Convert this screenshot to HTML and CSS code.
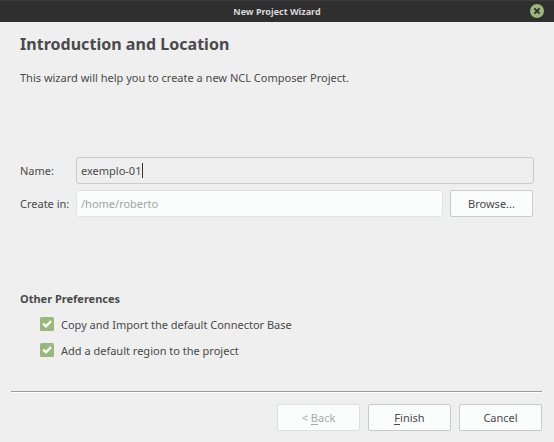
FILE: index.html
```html
<!DOCTYPE html>
<html lang="en">
<head>
<meta charset="utf-8">
<title>New Project Wizard</title>
<link rel="stylesheet" href="styles.css">
</head>
<body>
<div class="window">
  <header class="titlebar">
    <span class="titlebar-text">New Project Wizard</span>
    <svg class="close" width="14" height="14" viewBox="0 0 14 14"><circle cx="7" cy="7" r="7" fill="#9ab87c"/><path d="M4.4 4.4l5.2 5.2M9.6 4.4L4.4 9.6" stroke="#2f2f2f" stroke-width="1.9"/></svg>
  </header>
  <main class="page">
    <h1 class="heading">Introduction and Location</h1>
    <p class="intro">This wizard will help you to create a new NCL Composer Project.</p>
    <div class="form">
      <div class="row">
        <span class="label">Name:</span>
        <div class="field field-active"><span>exemplo-01</span><i class="caret"></i></div>
      </div>
      <div class="row">
        <span class="label">Create in:</span>
        <div class="field field-disabled"><span>/home/roberto</span></div>
        <button class="button browse">Browse...</button>
      </div>
    </div>
    <h2 class="subheading">Other Preferences</h2>
    <div class="options">
      <div class="option">
        <svg class="check" width="14" height="14" viewBox="0 0 14 14"><rect width="14" height="14" rx="1.5" fill="#9ab87c"/><path d="M3.2 6.6l2.8 2.7 5-5.2" fill="none" stroke="#fff" stroke-width="2.3"/></svg>
        <span>Copy and Import the default Connector Base</span>
      </div>
      <div class="option">
        <svg class="check" width="14" height="14" viewBox="0 0 14 14"><rect width="14" height="14" rx="1.5" fill="#9ab87c"/><path d="M3.2 6.6l2.8 2.7 5-5.2" fill="none" stroke="#fff" stroke-width="2.3"/></svg>
        <span>Add a default region to the project</span>
      </div>
    </div>
  </main>
  <footer class="footer">
    <button class="button button-disabled" disabled><span>&lt; <span class="key">B</span>ack</span></button>
    <button class="button"><span><span class="key">F</span>inish</span></button>
    <button class="button">Cancel</button>
  </footer>
</div>
</body>
</html>
```
FILE: styles.css
```css
* { box-sizing: border-box; }
body {
  margin: 0;
  background: #efefef;
  color: #4a4a4a;
  font: 11px/16px "Noto Sans", sans-serif;
}
.window {
  width: 554px;
  height: 442px;
  display: flex;
  flex-direction: column;
  overflow: hidden;
}
.titlebar {
  height: 22px;
  flex: none;
  display: grid;
  grid-template-columns: 1fr auto 1fr;
  align-items: center;
  padding: 1px 10px 0;
  background: #2f2f2f;
  border-top: 1px solid #3b3b3b;
  color: #d8d8d8;
}
.titlebar-text { grid-column: 2; font-size: 9px; font-weight: 700; line-height: 14px; }
.close { justify-self: end; margin-top: -2px; }
.page { flex: 1; padding: 11px 20px 0; }
.heading { margin: 0; font-size: 16px; line-height: 22px; font-weight: 700; letter-spacing: 0.03px; }
.intro { margin: 15px 0 0; }
.form { margin-top: 71px; display: flex; flex-direction: column; gap: 6px; }
.row { display: flex; align-items: center; }
.label { width: 56px; flex: none; white-space: nowrap; }
.field {
  flex: 1;
  height: 27px;
  display: flex;
  align-items: center;
  padding: 0 4px;
  border: 1px solid #cacaca;
  border-radius: 3px;
}
.field-disabled { background: #fbfdfc; border-color: #e2e2e2; color: #a2a5a3; }
.caret { width: 1px; height: 15px; margin-left: 1px; background: #333; }
.button {
  width: 83px;
  height: 27px;
  padding: 0;
  border: 1px solid #cacaca;
  border-radius: 2px;
  background: #fbfdfc;
  color: #4a4a4a;
  font: inherit;
}
.browse { margin: 0 1px 0 7px; }
.button-disabled { border-color: #e0e0e0; color: #a9abaa; }
.key { display: inline-block; height: 15px; line-height: 15px; border-bottom: 1px solid currentColor; }
.subheading { margin: 74px 0 0; font-size: 11px; line-height: 16px; font-weight: 700; }
.options { margin: 9px 0 0 20px; display: flex; flex-direction: column; gap: 8px; }
.option { display: flex; gap: 7px; height: 18px; align-items: center; }
.check { flex: none; margin-top: -2px; }
.footer {
  flex: none;
  height: 51px;
  margin: 0 12px 0 11px;
  padding-top: 12px;
  border-top: 1px solid #9b9d9c;
  box-shadow: inset 0 1px #fff;
  display: flex;
  justify-content: flex-end;
  align-items: flex-start;
  gap: 8px;
}
```
